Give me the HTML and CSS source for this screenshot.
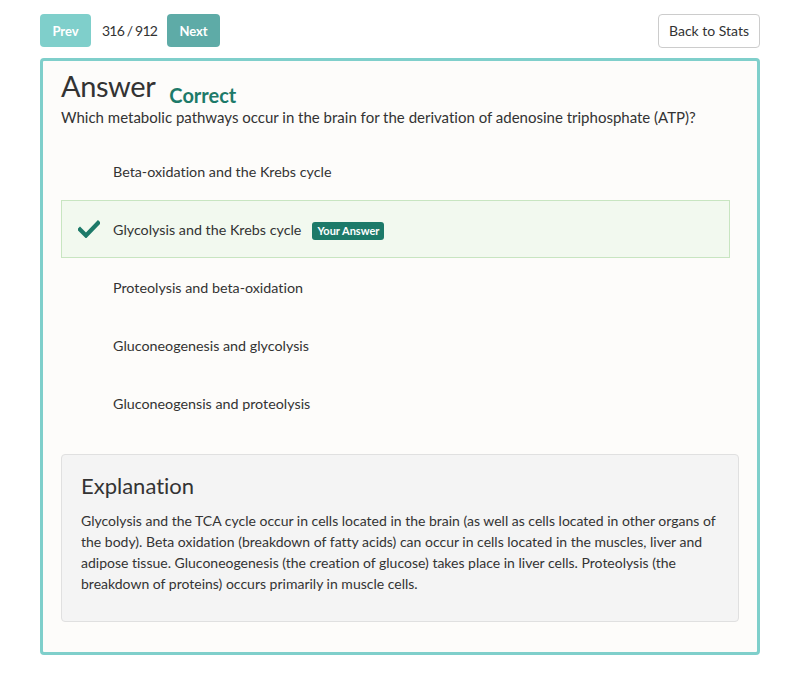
FILE: index.html
```html
<!DOCTYPE html>
<html>
<head>
<meta charset="utf-8">
<link rel="stylesheet" href="styles.css">
</head>
<body>
<div class="page">
  <div class="toolbar">
    <div class="pager">
      <button class="btn btn-prev">Prev</button>
      <span class="count">316 / 912</span>
      <button class="btn btn-next">Next</button>
    </div>
    <button class="btn-back">Back to Stats</button>
  </div>
  <div class="card">
    <div class="title-row">
      <h1 class="title">Answer</h1>
      <span class="status">Correct</span>
    </div>
    <p class="question">Which metabolic pathways occur in the brain for the derivation of adenosine triphosphate (ATP)?</p>
    <ul class="options">
      <li class="option"><span class="icon"></span><span class="opt-text">Beta-oxidation and the Krebs cycle</span></li>
      <li class="option selected"><span class="icon"><svg width="22" height="18" viewBox="0 0 22 18"><path d="M2 9.5 L8 15.5 L20 3" fill="none" stroke="#1d7a69" stroke-width="4.2" stroke-linecap="square"/></svg></span><span class="opt-text">Glycolysis and the Krebs cycle</span><span class="tag">Your Answer</span></li>
      <li class="option"><span class="icon"></span><span class="opt-text">Proteolysis and beta-oxidation</span></li>
      <li class="option"><span class="icon"></span><span class="opt-text">Gluconeogenesis and glycolysis</span></li>
      <li class="option"><span class="icon"></span><span class="opt-text">Gluconeogensis and proteolysis</span></li>
    </ul>
    <div class="explanation">
      <h2 class="exp-title">Explanation</h2>
      <p class="exp-text">Glycolysis and the TCA cycle occur in cells located in the brain (as well as cells located in other organs of the body). Beta oxidation (breakdown of fatty acids) can occur in cells located in the muscles, liver and adipose tissue. Gluconeogenesis (the creation of glucose) takes place in liver cells. Proteolysis (the breakdown of proteins) occurs primarily in muscle cells.</p>
    </div>
  </div>
</div>
</body>
</html>
```

FILE: styles.css
```css
* { box-sizing: border-box; }
html, body { margin: 0; padding: 0; background: #ffffff; }
body { font-family: Lato, "Open Sans", sans-serif; color: #333333; font-variant-ligatures: none; }
.page { padding: 14px 40px 0 40px; width: 800px; }
.toolbar { display: flex; justify-content: space-between; align-items: center; height: 33px; }
.pager { display: flex; align-items: center; }
.btn { border: none; border-radius: 4px; color: #ffffff; font-family: Lato, sans-serif; font-weight: bold; font-size: 13px; height: 33px; padding: 0; }
.btn-prev { background: #7fcfcb; width: 51px; }
.btn-next { background: #5eaba7; width: 53px; }
.count { font-size: 14px; letter-spacing: -0.8px; margin: 0 10px 0 11px; color: #333; }
.btn-back { height: 34px; width: 102px; background: #fff; border: 1px solid #cccccc; border-radius: 4px; font-family: Lato, sans-serif; font-size: 14px; color: #333; padding: 0; }
.card { margin-top: 11px; border: 3px solid #7fcfcb; border-radius: 4px; background: #fdfcfa; height: 597px; padding: 7px 18px 0 18px; }
.title-row { display: flex; align-items: baseline; }
.title { margin: 0; font-size: 29px; letter-spacing: -0.4px; font-weight: normal; line-height: 36px; color: #333; }
.status { margin-left: 14px; font-size: 20px; font-weight: bold; color: #1d7a69; position: relative; top: 6px; }
.question { margin: 3px 0 0 0; font-size: 15px; line-height: 20px; }
.options { list-style: none; margin: 15px 9px 0 0; padding: 0; }
.option { display: flex; align-items: center; height: 58px; font-size: 14.3px; border: 1px solid transparent; }
.option.selected { background: #f2f9ef; border-color: #c8e5c1; }
.icon { width: 51px; display: flex; justify-content: flex-start; padding-left: 16px; }
.tag { margin-left: 11px; background: #1d7a69; color: #fff; font-weight: bold; font-size: 11px; padding: 3px 5px; border-radius: 3px; line-height: 12px; position: relative; top: 2px; }
.explanation { margin-top: 22px; background: #f4f4f4; border: 1px solid #e0e0e0; border-radius: 4px; height: 168px; padding: 17px 19px 0 19px; }
.exp-title { margin: 0; font-size: 22px; font-weight: normal; line-height: 28px; color: #333; }
.exp-text { margin: 10px 0 0 0; font-size: 14px; line-height: 21px; }
```
